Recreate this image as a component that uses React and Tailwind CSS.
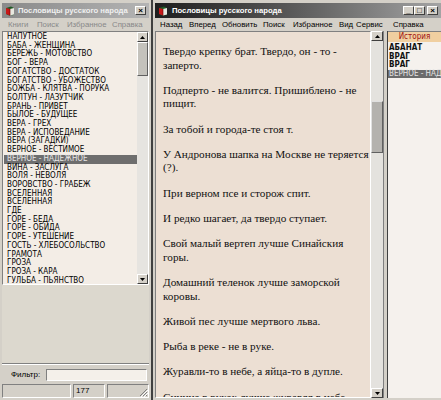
import React from 'react';

const TOPICS = [
  'НАПУТНОЕ', 'БАБА - ЖЕНЩИНА', 'БЕРЕЖЬ - МОТОВСТВО', 'БОГ - ВЕРА', 'БОГАТСТВО - ДОСТАТОК',
  'БОГАТСТВО - УБОЖЕСТВО', 'БОЖБА - КЛЯТВА - ПОРУКА', 'БОЛТУН - ЛАЗУТЧИК', 'БРАНЬ - ПРИВЕТ',
  'БЫЛОЕ - БУДУЩЕЕ', 'ВЕРА - ГРЕХ', 'ВЕРА - ИСПОВЕДАНИЕ', 'ВЕРА (ЗАГАДКИ)', 'ВЕРНОЕ - ВЕСТИМОЕ',
  'ВЕРНОЕ - НАДЕЖНОЕ', 'ВИНА - ЗАСЛУГА', 'ВОЛЯ - НЕВОЛЯ', 'ВОРОВСТВО - ГРАБЕЖ', 'ВСЕЛЕННАЯ',
  'ВСЕЛЕННАЯ', 'ГДЕ', 'ГОРЕ - БЕДА', 'ГОРЕ - ОБИДА', 'ГОРЕ - УТЕШЕНИЕ', 'ГОСТЬ - ХЛЕБОСОЛЬСТВО',
  'ГРАМОТА', 'ГРОЗА', 'ГРОЗА - КАРА', 'ГУЛЬБА - ПЬЯНСТВО',
];

const PROVERBS = [
  ['Твердо крепку брат. Твердо, он - то -', 'заперто.'],
  ['Подперто - не валится. Пришиблено - не', 'пищит.'],
  ['За тобой и города-те стоя т.'],
  ['У Андронова шапка на Москве не теряется', '(?).'],
  ['При верном псе и сторож спит.'],
  ['И редко шагает, да твердо ступает.'],
  ['Свой малый вертеп лучше Синайския', 'горы.'],
  ['Домашний теленок лучше заморской', 'коровы.'],
  ['Живой пес лучше мертвого льва.'],
  ['Рыба в реке - не в руке.'],
  ['Журавли-то в небе, а яйца-то в дупле.'],
  ['Синица в руках лучше журавля в небе.'],
];

const HISTORY = ['АБАНАТ', 'ВРАГ', 'ВРАГ', 'ВЕРНОЕ - НАДЕЖНОЕ'];

const BookIcon = () => (
  <svg width="10" height="10" viewBox="0 0 10 10" className="shrink-0">
    <path d="M1 2 L6 0.5 L9 2 L9 9 L4 9.5 L1 8 Z" fill="#1f5a24" />
    <path d="M1 2 L5 3 L5 9.5 L1 8 Z" fill="#c81818" />
    <path d="M5 3 L9 2 L9 8.6 L5 9.5 Z" fill="#e8e8e0" />
    <path d="M5 3 L5 9.5" stroke="#600" strokeWidth="0.6" />
  </svg>
);

const WinBtn = ({ children }) => (
  <div className="w-[11px] h-[9px] shrink-0 bg-[#d4d0c8] border border-t-white border-l-white border-r-[#404040] border-b-[#404040] flex items-center justify-center text-black text-[8px] leading-none font-bold">
    {children}
  </div>
);

const Arrow = ({ down }) => (
  <div className="w-full h-[10px] bg-[#d4d0c8] border border-t-white border-l-white border-r-[#404040] border-b-[#404040] flex items-center justify-center shrink-0">
    <svg width="5" height="3" viewBox="0 0 5 3">
      <path d={down ? 'M0 0 L5 0 L2.5 3 Z' : 'M0 3 L5 3 L2.5 0 Z'} fill="#000" />
    </svg>
  </div>
);

export default function App() {
  return (
    <div className="w-[441px] h-[400px] overflow-hidden bg-[#d4d0c8] flex font-['Liberation_Sans',Arial,sans-serif]">
      {/* left window (inactive) */}
      <div className="w-[153px] shrink-0 h-full flex flex-col pt-[3px] px-[2px] pb-[2px] border-r-2 border-[#404040] overflow-hidden">
        <div className="h-[15px] shrink-0 flex items-center gap-[3px] px-[3px] bg-gradient-to-r from-[#8a8a8a] to-[#b4b4b4]">
          <BookIcon />
          <span className="text-[7.7px] font-bold text-[#f0f0f0] whitespace-nowrap leading-none">Пословицы русского народа</span>
          <div className="ml-auto"><WinBtn>×</WinBtn></div>
        </div>
        <div className="h-[13px] shrink-0 flex items-center text-[7.8px] text-[#888] leading-none whitespace-nowrap">
          <span className="ml-[6px] w-[29px]">Книги</span>
          <span className="w-[30px]">Поиск</span>
          <span className="w-[45px]">Избранное</span>
          <span>Справка</span>
        </div>
        <div className="h-[254px] shrink-0 flex border border-t-[#808080] border-l-[#808080] border-b-white border-r-white bg-[#f3ede6]">
          <div className="flex-1 overflow-hidden pt-[1px] pl-[1px] font-['Liberation_Sans_Narrow','DejaVu_Sans_Condensed',sans-serif] text-[8px] leading-[8.7px] text-black">
            {TOPICS.map((t, i) => (
              <div key={i} className={`pl-[3px] whitespace-nowrap ${i === 14 ? 'bg-[#6e6e6e] text-[#e6e6e6]' : ''}`}>{t}</div>
            ))}
          </div>
          <div className="w-[11px] flex flex-col bg-[#e6e4e0]">
            <Arrow />
            <div className="h-[34px] bg-[#c4c2bc] border border-t-white border-l-white border-r-[#606060] border-b-[#606060]" />
            <div className="flex-1" />
            <Arrow down />
          </div>
        </div>
        <div className="flex-1 bg-[#dcd8ce] border-b border-[#808080]" />
        <div className="h-[20px] shrink-0 flex items-center border-t border-white">
          <span className="ml-[9px] text-[8px] text-black leading-none">Фильтр:</span>
          <div className="ml-auto mr-[2px] w-[101px] h-[12px] bg-[#f4f0ea] border border-t-[#808080] border-l-[#808080] border-b-white border-r-white" />
        </div>
        <div className="h-[14px] shrink-0 flex gap-[2px] text-[8px] leading-none">
          <div className="w-[69px] border border-t-[#808080] border-l-[#808080] border-b-white border-r-white" />
          <div className="w-[32px] border border-t-[#808080] border-l-[#808080] border-b-white border-r-white flex items-center pl-[2px]">177</div>
          <div className="flex-1 border border-t-[#808080] border-l-[#808080] border-b-white border-r-white flex items-end justify-end">
            <svg width="9" height="9" viewBox="0 0 9 9">
              <path d="M8 1 L1 8 M8 4 L4 8 M8 7 L7 8" stroke="#808080" strokeWidth="1" />
              <path d="M9 2 L2 9 M9 5 L5 9" stroke="#fff" strokeWidth="1" />
            </svg>
          </div>
        </div>
      </div>

      {/* right window (active) */}
      <div className="flex-1 min-w-0 h-full flex flex-col pt-[3px] pl-[2px] pb-[2px] overflow-hidden">
        <div className="h-[15px] shrink-0 flex items-center gap-[4px] px-[3px] bg-gradient-to-r from-[#1e1e1e] to-[#a4a4a4]">
          <BookIcon />
          <span className="text-[7.7px] font-bold text-white whitespace-nowrap leading-none">Пословицы русского народа</span>
          <div className="ml-auto flex items-center">
            <WinBtn>_</WinBtn>
            <WinBtn>□</WinBtn>
            <div className="ml-[2px]"><WinBtn>×</WinBtn></div>
          </div>
        </div>
        <div className="h-[13px] shrink-0 flex items-center text-[7.8px] text-black leading-none whitespace-nowrap">
          <span className="ml-[5px] w-[29px]">Назад</span>
          <span className="w-[33px]">Вперед</span>
          <span className="w-[41px]">Обновить</span>
          <span className="w-[30px]">Поиск</span>
          <span className="w-[46px]">Избранное</span>
          <span className="w-[17px]">Вид</span>
          <span className="w-[37px]">Сервис</span>
          <span>Справка</span>
        </div>
        <div className="flex-1 min-h-0 flex">
          <div className="w-[216px] shrink-0 flex border border-t-[#808080] border-l-[#808080] border-b-white border-r-white">
            <div className="flex-1 overflow-hidden bg-[#ecdfd3] pl-[7px] pt-[13px] font-['Liberation_Serif','Times_New_Roman',serif] text-[11.2px] leading-[13.5px] text-[#111] flex flex-col gap-[11.8px]">
              {PROVERBS.map((p, i) => (
                <div key={i}>
                  {p.map((l, j) => <div key={j} className="whitespace-nowrap">{l}</div>)}
                </div>
              ))}
            </div>
          </div>
          <div className="w-[12px] shrink-0 flex flex-col bg-[#e4e2de]">
            <Arrow />
            <div className="h-[60px]" />
            <div className="h-[52px] bg-[#b4b2ae] border border-t-[#e0e0e0] border-l-[#e0e0e0] border-r-[#606060] border-b-[#606060]" />
            <div className="flex-1" />
            <Arrow down />
          </div>
          <div className="w-[5px] shrink-0 border-l border-[#808080] border-r border-r-[#404040]" />
          <div className="flex-1 min-w-0 bg-[#f5f1ed] overflow-hidden border-t border-[#808080] font-['Liberation_Sans_Narrow','DejaVu_Sans_Condensed',sans-serif] text-[8px] leading-[8.5px]">
            <div className="h-[10px] bg-[#f0cfa0] text-[#a01010] flex items-center justify-center">История</div>
            <div className="pt-[2px] font-bold text-[#111]">
              {HISTORY.map((h, i) => (
                <div key={i} className={`pl-[1px] whitespace-nowrap ${i === 3 ? 'bg-[#6b6b6b] text-[#e4e4e4] font-normal' : ''}`}>{h}</div>
              ))}
            </div>
          </div>
        </div>
      </div>
    </div>
  );
}
